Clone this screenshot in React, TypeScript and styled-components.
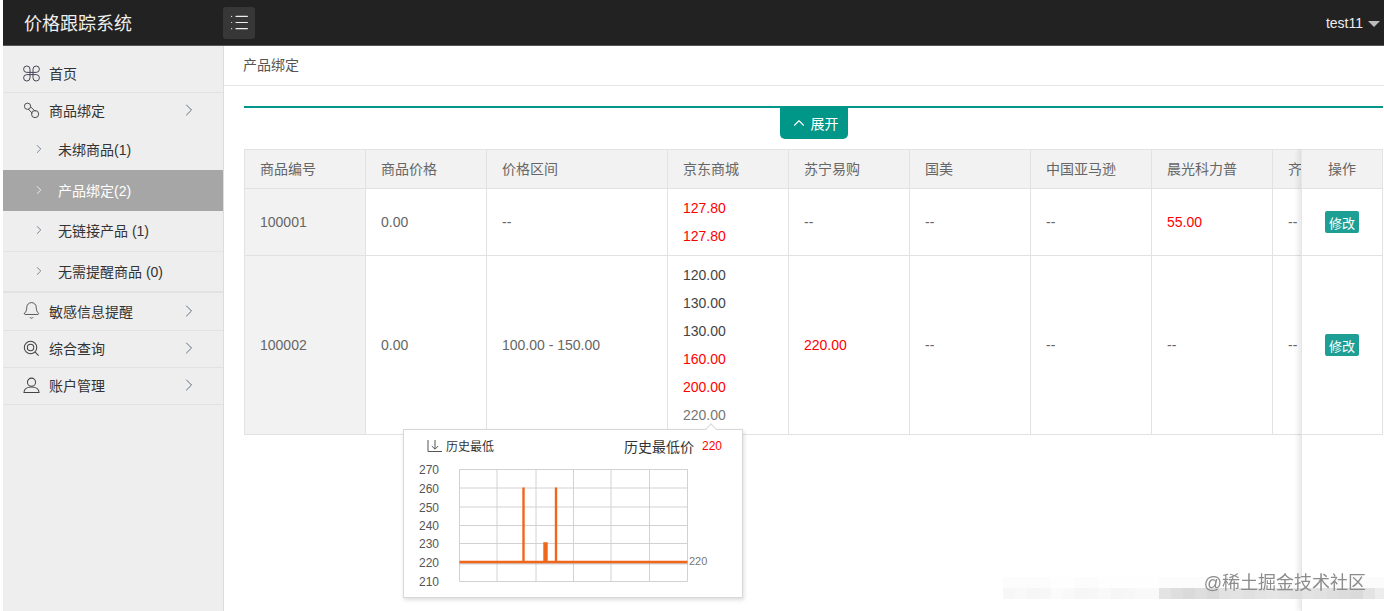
import { Bell, ChevronRight, ChevronUp, List } from "lucide-react";
import styled, { createGlobalStyle } from "styled-components";

const GlobalStyle = createGlobalStyle`
  html, body {
    margin: 0;
    height: 100%;
    background: #fff;
    overflow: hidden;
  }
  body {
    font-family: "Liberation Sans", "Noto Sans CJK SC", sans-serif;
    font-size: 14px;
    color: #333;
  }
`;

const Page = styled.div`
  width: 1384px;
  height: 611px;
  padding-left: 3px;
  box-sizing: border-box;
  display: flex;
  flex-direction: column;
  overflow: hidden;
  position: relative;
`;

const TopBar = styled.header`
  flex: 0 0 46px;
  box-sizing: border-box;
  display: flex;
  align-items: center;
  background: #222;
  border-bottom: 1px solid #555;
  color: #fff;
`;

const Brand = styled.div`
  width: 220px;
  padding: 0 0 2px 21px;
  box-sizing: border-box;
  font-size: 18px;
  color: #eee;
`;

const MenuToggle = styled.button`
  width: 32px;
  height: 32px;
  padding: 0;
  display: flex;
  align-items: center;
  justify-content: center;
  background: #373737;
  border: none;
  border-radius: 3px;
  color: #eee;
`;

const UserMenu = styled.div`
  margin-left: auto;
  margin-right: 4px;
  display: flex;
  align-items: center;
  gap: 5px;
  font-size: 14px;
  color: #eee;
`;

const Caret = styled.span`
  width: 0;
  height: 0;
  margin-top: 2px;
  border-left: 6px solid transparent;
  border-right: 6px solid transparent;
  border-top: 6px solid #bbb;
`;

const Body = styled.div`
  flex: 1;
  display: flex;
  min-height: 0;
`;

const Sidebar = styled.nav`
  flex: 0 0 221px;
  box-sizing: border-box;
  background: #eee;
  border-right: 1px solid #ddd;
`;

const MenuRow = styled.div<{ $h: number; $flat?: boolean; $top?: number }>`
  height: ${(p) => p.$h}px;
  box-sizing: border-box;
  display: flex;
  align-items: center;
  padding: ${(p) => p.$top ?? 0}px 0 2px 20px;
  border-bottom: ${(p) => (p.$flat ? "none" : "1px solid #e2e2e2")};
  color: #333;
`;

const MenuIcon = styled.span`
  width: 16px;
  height: 18px;
  margin-right: 10px;
  color: #333;
  display: flex;
  align-items: center;
  justify-content: center;
  svg {
    flex: none;
  }
`;

const Arrow = styled.span`
  margin-left: auto;
  margin-right: 24px;
  display: flex;
  color: #456;
  svg {
    flex: none;
  }
`;

const SubRow = styled.div<{ $active?: boolean; $h: number; $plain?: boolean; $thick?: boolean }>`
  height: ${(p) => p.$h}px;
  box-sizing: border-box;
  display: flex;
  align-items: center;
  padding: 0 0 2px 30px;
  background: ${(p) => (p.$active ? "#a6a6a6" : "transparent")};
  color: ${(p) => (p.$active ? "#fff" : "#333")};
  border-bottom: ${(p) => (p.$plain ? "none" : p.$thick ? "2px solid #e2e2e2" : "1px solid #e4e4e4")};
`;

const SubArrow = styled.span<{ $active?: boolean }>`
  width: 12px;
  margin-right: 13px;
  display: flex;
  justify-content: center;
  color: ${(p) => (p.$active ? "#fff" : "#567")};
  svg {
    flex: none;
  }
`;

const Main = styled.main`
  flex: 1;
  min-width: 0;
  display: flex;
  flex-direction: column;
`;

const Crumb = styled.div`
  flex: 0 0 40px;
  box-sizing: border-box;
  padding: 0 0 4px 19px;
  display: flex;
  align-items: center;
  border-bottom: 1px solid #e7e7e7;
  color: #555;
`;

const Content = styled.div`
  flex: 1;
  min-height: 0;
  padding: 20px 0 0 20px;
  display: flex;
  flex-direction: column;
`;

const Rule = styled.div`
  height: 2px;
  margin-right: 1px;
  background: #009688;
`;

const ExpandWrap = styled.div`
  display: flex;
  justify-content: center;
  height: 41px;
`;

const ExpandButton = styled.button`
  width: 68px;
  height: 31px;
  padding: 0 0 2px;
  display: flex;
  align-items: center;
  justify-content: center;
  gap: 3px;
  background: #009688;
  color: #fff;
  border: none;
  border-radius: 0 0 5px 5px;
  font: inherit;
`;

const TableArea = styled.div`
  flex: 1;
  min-height: 0;
  margin-right: 1px;
  position: relative;
  overflow: hidden;
`;

const PriceTable = styled.table`
  table-layout: fixed;
  width: 1149px;
  border-collapse: collapse;
  color: #666;
`;

const Row = styled.tr<{ $h: number }>`
  height: ${(p) => p.$h}px;
`;

const Th = styled.th`
  height: 39px;
  box-sizing: border-box;
  padding: 0 15px 2px;
  text-align: left;
  font-weight: 400;
  background: #f2f2f2;
  border: 1px solid #e2e2e2;
  color: #666;
`;

const Td = styled.td<{ $shade?: boolean; $tone?: string }>`
  padding: 0 15px;
  border: 1px solid #e2e2e2;
  background: ${(p) => (p.$shade ? "#f2f2f2" : "#fff")};
  color: ${(p) => p.$tone || "#666"};
`;

const Price = styled.div<{ $tone: string }>`
  height: 28px;
  line-height: 28px;
  color: ${(p) => p.$tone};
`;

const FixedColumn = styled.div`
  position: absolute;
  top: 0;
  right: 0;
  bottom: 0;
  width: 82px;
  box-sizing: border-box;
  background: #fff;
  border-left: 1px solid #e6e6e6;
  box-shadow: -3px 0 5px rgba(0, 0, 0, 0.09);
`;

const FixedHead = styled.div`
  height: 40px;
  box-sizing: border-box;
  padding-bottom: 2px;
  display: flex;
  align-items: center;
  justify-content: center;
  background: #f2f2f2;
  border: 1px solid #e2e2e2;
  border-left: none;
  color: #666;
`;

const FixedCell = styled.div<{ $h: number }>`
  height: ${(p) => p.$h}px;
  box-sizing: border-box;
  display: flex;
  align-items: center;
  justify-content: center;
  border-right: 1px solid #e2e2e2;
  border-bottom: 1px solid #e2e2e2;
`;

const EditButton = styled.span`
  width: 34px;
  height: 22px;
  display: flex;
  align-items: center;
  justify-content: center;
  background: #1e9f95;
  border-radius: 2px;
  color: #fff;
  font-size: 13px;
`;

const Popover = styled.div`
  position: absolute;
  left: 159px;
  top: 280px;
  width: 340px;
  height: 169px;
  box-sizing: border-box;
  background: #fff;
  border: 1px solid #d8d8d8;
  box-shadow: 1px 2px 4px rgba(0, 0, 0, 0.14);
  &::before {
    content: "";
    position: absolute;
    left: 303px;
    top: -5px;
    width: 7px;
    height: 7px;
    background: #fff;
    border-left: 1px solid #d8d8d8;
    border-top: 1px solid #d8d8d8;
    transform: rotate(45deg);
  }
`;

const PopoverHead = styled.div`
  height: 33px;
  box-sizing: border-box;
  padding: 0 20px 2px 23px;
  display: flex;
  align-items: center;
  color: #333;
`;

const LowTag = styled.span`
  display: flex;
  align-items: center;
  gap: 3px;
  font-size: 12px;
`;

const LowPrice = styled.span`
  margin-left: auto;
  font-size: 14px;
`;

const LowValue = styled.span`
  margin-left: 8px;
  font-size: 12px;
  color: #f00;
`;

const Watermark = styled.div`
  position: absolute;
  right: 0;
  bottom: 12px;
  width: 381px;
  pointer-events: none;
`;

const MosaicRow = styled.div`
  display: flex;
  height: 11px;
`;

const Patch = styled.span<{ $g: number }>`
  flex: 0 0 12px;
  background: rgba(${(p) => p.$g}, ${(p) => p.$g}, ${(p) => p.$g}, 0.85);
`;

const MarkText = styled.div`
  position: absolute;
  right: 18px;
  top: -6px;
  font-size: 18px;
  line-height: 24px;
  color: #8c8c8c;
  filter: blur(0.4px);
`;

const CloverIcon = () => (
  <svg width="17" height="17" viewBox="0 0 17 17" fill="none" stroke="#445" strokeWidth="1">
    <path d="M7 8.5V4.2A3.2 3.2 0 1 0 3.8 7.4H13.2A3.2 3.2 0 1 0 10 4.2V12.8A3.2 3.2 0 1 0 13.2 9.6H3.8A3.2 3.2 0 1 0 7 12.8V8.5" />
  </svg>
);

const ChainIcon = () => (
  <svg width="17" height="17" viewBox="0 0 18 18" fill="none" stroke="#444" strokeWidth="1">
    <circle cx="4.8" cy="4.5" r="3.3" />
    <circle cx="12.8" cy="12.8" r="3.8" />
    <path d="M5.5 7.5 10 12M8 5l5 5" />
  </svg>
);

const SearchIcon = () => (
  <svg width="17" height="17" viewBox="0 0 18 18" fill="none" stroke="#444" strokeWidth="1.1">
    <circle cx="8" cy="8" r="6.6" />
    <circle cx="8" cy="8" r="3.4" />
    <path d="m12.8 12.8 3.8 3.8" />
  </svg>
);

const UserIcon = () => (
  <svg width="17" height="17" viewBox="0 0 18 18" fill="none" stroke="#444" strokeWidth="1.1">
    <circle cx="9" cy="5.5" r="4.3" />
    <path d="M1 16.5c0-3.6 3.4-6 8-6s8 2.4 8 6z" />
  </svg>
);

const LowIcon = () => (
  <svg width="16" height="14" viewBox="0 0 16 14" fill="none" stroke="#555" strokeWidth="1">
    <path d="M1 1v11.5h14M8 1v9M4.8 7 8 10.2 11.2 7" />
  </svg>
);

const yLabels = ["270", "260", "250", "240", "230", "220", "210"];
const gridY = [6, 24.5, 43.5, 62, 80, 99, 118];
const gridX = [55.5, 93, 132, 169.5, 207, 245.5, 283.5];

const PriceChart = () => (
  <svg width="338" height="130" viewBox="0 0 338 130">
    {gridY.map((y) => (
      <line key={y} x1="55.5" x2="283.5" y1={y + 0.5} y2={y + 0.5} stroke="#d2d2d2" />
    ))}
    {gridX.map((x) => (
      <line key={x} x1={x} x2={x} y1="6" y2="118.5" stroke="#d2d2d2" />
    ))}
    {yLabels.map((label, i) => (
      <text key={label} x="15" y={gridY[i] + 5} fontSize="12" fill="#555" fontFamily="Liberation Sans">
        {label}
      </text>
    ))}
    <line x1="55.5" x2="283.5" y1="100.5" y2="100.5" stroke="#999" strokeWidth="2" opacity="0.45" />
    <path
      d="M55.5 99H119.5V24.5V99H140.5V80.5H142.5V99H152V24.5V99H283.5"
      fill="none"
      stroke="#f0661a"
      strokeWidth="2.4"
    />
    <text x="285" y="102" fontSize="11" fill="#777" fontFamily="Liberation Sans">
      220
    </text>
  </svg>
);

const columns = [121, 121, 181, 121, 121, 121, 121, 121, 121];
const heads = ["商品编号", "商品价格", "价格区间", "京东商城", "苏宁易购", "国美", "中国亚马逊", "晨光科力普", "齐心"];
const RED = "#f00";

const patchesTop = [252, 252, 252, 252, 254, 254, 252, 252, 254, 254, 254, 254, 254, 252, 252, 252, 252, 252, 254, 254, 254, 254, 254, 254, 252, 252, 250, 250, 250, 250, 250, 250];
const patchesBottom = [246, 248, 244, 246, 250, 248, 244, 246, 248, 244, 246, 248, 248, 222, 216, 212, 216, 210, 220, 222, 218, 222, 224, 222, 218, 222, 220, 216, 214, 212, 222, 234];

const App = () => (
  <>
    <GlobalStyle />
    <Page>
      <TopBar>
        <Brand>价格跟踪系统</Brand>
        <MenuToggle>
          <List size={21} strokeWidth={1.3} />
        </MenuToggle>
        <UserMenu>
          test11
          <Caret />
        </UserMenu>
      </TopBar>
      <Body>
        <Sidebar>
          <MenuRow $h={47} $top={10}>
            <MenuIcon>
              <CloverIcon />
            </MenuIcon>
            首页
          </MenuRow>
          <MenuRow $h={36} $flat>
            <MenuIcon>
              <ChainIcon />
            </MenuIcon>
            商品绑定
            <Arrow>
              <ChevronRight size={20} strokeWidth={1} />
            </Arrow>
          </MenuRow>
          <SubRow $h={41} $plain>
            <SubArrow>
              <ChevronRight size={14} strokeWidth={1.3} />
            </SubArrow>
            未绑商品(1)
          </SubRow>
          <SubRow $h={41} $active $plain>
            <SubArrow $active>
              <ChevronRight size={14} strokeWidth={1.3} />
            </SubArrow>
            产品绑定(2)
          </SubRow>
          <SubRow $h={41}>
            <SubArrow>
              <ChevronRight size={14} strokeWidth={1.3} />
            </SubArrow>
            无链接产品 (1)
          </SubRow>
          <SubRow $h={41} $thick>
            <SubArrow>
              <ChevronRight size={14} strokeWidth={1.3} />
            </SubArrow>
            无需提醒商品 (0)
          </SubRow>
          <MenuRow $h={38}>
            <MenuIcon>
              <Bell size={19} strokeWidth={1} />
            </MenuIcon>
            敏感信息提醒
            <Arrow>
              <ChevronRight size={20} strokeWidth={1} />
            </Arrow>
          </MenuRow>
          <MenuRow $h={37}>
            <MenuIcon>
              <SearchIcon />
            </MenuIcon>
            综合查询
            <Arrow>
              <ChevronRight size={20} strokeWidth={1} />
            </Arrow>
          </MenuRow>
          <MenuRow $h={37}>
            <MenuIcon>
              <UserIcon />
            </MenuIcon>
            账户管理
            <Arrow>
              <ChevronRight size={20} strokeWidth={1} />
            </Arrow>
          </MenuRow>
        </Sidebar>
        <Main>
          <Crumb>产品绑定</Crumb>
          <Content>
            <Rule />
            <ExpandWrap>
              <ExpandButton>
                <ChevronUp size={18} strokeWidth={1.5} />
                展开
              </ExpandButton>
            </ExpandWrap>
            <TableArea>
              <PriceTable>
                <colgroup>
                  {columns.map((w, i) => (
                    <col key={i} width={w} />
                  ))}
                </colgroup>
                <thead>
                  <tr>
                    {heads.map((h) => (
                      <Th key={h}>{h}</Th>
                    ))}
                  </tr>
                </thead>
                <tbody>
                  <Row $h={67}>
                    <Td $shade>100001</Td>
                    <Td>0.00</Td>
                    <Td>--</Td>
                    <Td>
                      <Price $tone={RED}>127.80</Price>
                      <Price $tone={RED}>127.80</Price>
                    </Td>
                    <Td>--</Td>
                    <Td>--</Td>
                    <Td>--</Td>
                    <Td $tone={RED}>55.00</Td>
                    <Td>--</Td>
                  </Row>
                  <Row $h={179}>
                    <Td $shade>100002</Td>
                    <Td>0.00</Td>
                    <Td>100.00 - 150.00</Td>
                    <Td>
                      <Price $tone="#444">120.00</Price>
                      <Price $tone="#444">130.00</Price>
                      <Price $tone="#444">130.00</Price>
                      <Price $tone={RED}>160.00</Price>
                      <Price $tone={RED}>200.00</Price>
                      <Price $tone="#777">220.00</Price>
                    </Td>
                    <Td $tone={RED}>220.00</Td>
                    <Td>--</Td>
                    <Td>--</Td>
                    <Td>--</Td>
                    <Td>--</Td>
                  </Row>
                </tbody>
              </PriceTable>
              <FixedColumn>
                <FixedHead>操作</FixedHead>
                <FixedCell $h={67}>
                  <EditButton>修改</EditButton>
                </FixedCell>
                <FixedCell $h={179}>
                  <EditButton>修改</EditButton>
                </FixedCell>
              </FixedColumn>
              <Popover>
                <PopoverHead>
                  <LowTag>
                    <LowIcon />
                    历史最低
                  </LowTag>
                  <LowPrice>历史最低价</LowPrice>
                  <LowValue>220</LowValue>
                </PopoverHead>
                <PriceChart />
              </Popover>
            </TableArea>
          </Content>
        </Main>
      </Body>
      <Watermark>
        <MosaicRow>
          {patchesTop.map((g, i) => (
            <Patch key={i} $g={g} />
          ))}
        </MosaicRow>
        <MosaicRow>
          {patchesBottom.map((g, i) => (
            <Patch key={i} $g={g} />
          ))}
        </MosaicRow>
        <MarkText>@稀土掘金技术社区</MarkText>
      </Watermark>
    </Page>
  </>
);

export default App;
